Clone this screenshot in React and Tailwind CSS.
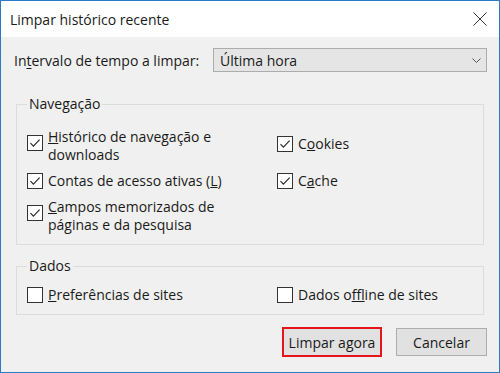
import { useState } from 'react'

// Windows-style "Limpar histórico recente" dialog
function CheckBox({ checked }) {
  return (
    <span className="w-4 h-4 shrink-0 border border-[#333333] bg-white flex items-center justify-center">
      {checked && (
        <svg width="14" height="14" viewBox="0 0 14 14" fill="none">
          <path d="M2.5 7.2 L5.4 10.1 L11.6 3.6" stroke="#2b2b2b" strokeWidth="1.2" />
        </svg>
      )}
    </span>
  )
}

function Option({ checked, multi, className = '', children }) {
  return (
    <label className={`flex gap-[5px] ${multi ? 'items-start' : 'items-center'} ${className}`}>
      <span className={multi ? 'mt-[7px]' : ''}>
        <CheckBox checked={checked} />
      </span>
      <span className="leading-[18px]">{children}</span>
    </label>
  )
}

function Group({ title, className = '', children }) {
  return (
    <fieldset className={`mx-[15px] border border-[#dcdcdc] px-[10px] pb-[10px] ${className}`}>
      <legend className="px-[2px] leading-[18px]">{title}</legend>
      {children}
    </fieldset>
  )
}

export default function App() {
  const [range] = useState('Última hora')

  return (
    <div
      className="w-[500px] h-[373px] border border-[#2b7bc4] bg-[#f0f0f0] flex flex-col text-[14px] text-[#1a1a1a]"
      style={{ fontFamily: '"Segoe UI", "Open Sans", sans-serif' }}
    >
      {/* Title bar */}
      <div className="h-9 bg-white flex items-center justify-between pl-[9px] pr-[12px]">
        <span>Limpar histórico recente</span>
        <svg width="14" height="14" viewBox="0 0 14 14" fill="none">
          <path d="M0.5 0.5 L13.5 13.5 M13.5 0.5 L0.5 13.5" stroke="#333" strokeWidth="1" />
        </svg>
      </div>

      {/* Time range */}
      <div className="mt-[11px] flex items-center pl-[13px] pr-[12px]">
        <span>
          In<u className="underline-offset-2">t</u>ervalo de tempo a limpar:
        </span>
        <div className="ml-auto w-[274px] h-6 border border-[#acacac] bg-[#e5e5e5] flex items-center justify-between pl-[6px] pr-[5px]">
          <span>{range}</span>
          <svg width="9" height="5" viewBox="0 0 9 5" fill="none">
            <path d="M0.5 0.5 L4.5 4.5 L8.5 0.5" stroke="#555" strokeWidth="1" />
          </svg>
        </div>
      </div>

      {/* Navegação */}
      <Group title="Navegação" className="mt-[23px]">
        <div className="pt-[15px] grid grid-cols-[250px_1fr] gap-y-2">
          <Option checked multi>
            <u>H</u>istórico de navegação e<br />downloads
          </Option>
          <Option checked className="self-start mt-[7px]">
            C<u>o</u>okies
          </Option>
          <Option checked>
            Contas de acesso ativas (<u>L</u>)
          </Option>
          <Option checked>
            C<u>a</u>che
          </Option>
          <Option checked multi>
            <u>C</u>ampos memorizados de<br />páginas e da pesquisa
          </Option>
        </div>
      </Group>

      {/* Dados */}
      <Group title="Dados" className="mt-[12px]">
        <div className="pt-[11px] grid grid-cols-[250px_1fr]">
          <Option>
            <u>P</u>referências de sites
          </Option>
          <Option>
            Dados o<u>f</u>fline de sites
          </Option>
        </div>
      </Group>

      {/* Buttons */}
      <div className="mt-[12px] flex items-center justify-end gap-[14px] pr-[12px]">
        <div className="w-[100px] h-[30px] border-2 border-[#e8141c]">
          <button className="w-full h-full bg-[#e1e1e1] flex items-center justify-center">
            Limpar agora
          </button>
        </div>
        <button className="w-[91px] h-7 border border-[#adadad] bg-[#e1e1e1] flex items-center justify-center">
          Cancelar
        </button>
      </div>
    </div>
  )
}
